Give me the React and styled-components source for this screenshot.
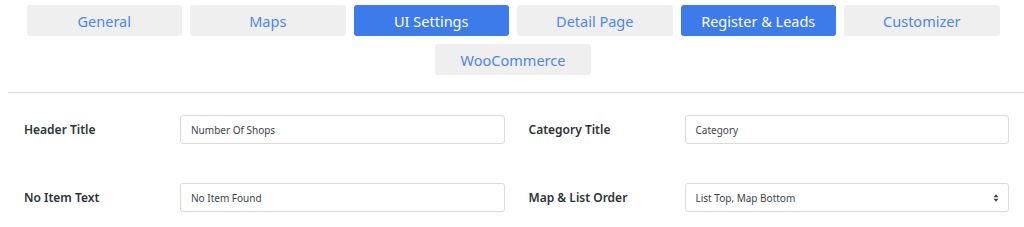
import React from "react";
import styled, { createGlobalStyle } from "styled-components";

const GlobalStyle = createGlobalStyle`
  body {
    margin: 0;
    background: #fff;
    font-family: "Noto Sans", "Open Sans", sans-serif;
  }
`;

const tabs = [
  { label: "General" },
  { label: "Maps" },
  { label: "UI Settings", active: true },
  { label: "Detail Page" },
  { label: "Register & Leads", active: true },
  { label: "Customizer" },
  { label: "WooCommerce" },
];

function App() {
  return (
    <Page>
      <GlobalStyle />
      <TabBar>
        {tabs.map((t) => (
          <Tab key={t.label} $active={t.active}>
            {t.label}
          </Tab>
        ))}
      </TabBar>
      <Divider />
      <Form>
        <Field>
          <Label>Header Title</Label>
          <TextInput>Number Of Shops</TextInput>
        </Field>
        <Field>
          <Label>Category Title</Label>
          <TextInput>Category</TextInput>
        </Field>
        <Field>
          <Label>No Item Text</Label>
          <TextInput>No Item Found</TextInput>
        </Field>
        <Field>
          <Label>Map &amp; List Order</Label>
          <TextInput>
            List Top, Map Bottom
            <SelectArrow viewBox="0 0 8 12">
              <path d="M4 1.5 L7 5 H1 Z M4 10.5 L7 7 H1 Z" fill="#3c434a" />
            </SelectArrow>
          </TextInput>
        </Field>
      </Form>
    </Page>
  );
}

export default App;

const Page = styled.div`
  padding: 5px 0 0 8px;
`;

const TabBar = styled.div`
  display: flex;
  flex-wrap: wrap;
  justify-content: center;
  gap: 8px;
  padding-left: 1px;
  padding-right: 7px;
`;

const Tab = styled.div`
  width: 155.5px;
  height: 31px;
  box-sizing: border-box;
  display: flex;
  align-items: center;
  justify-content: center;
  border-radius: 3px;
  font-size: 14.5px;
  background: ${(p) => (p.$active ? "#3c7be9" : "#efefef")};
  color: ${(p) => (p.$active ? "#ffffff" : "#4c86ee")};
`;

const Divider = styled.div`
  height: 1px;
  background: #dcdcde;
  margin-top: 17px;
`;

const Form = styled.div`
  display: grid;
  grid-template-columns: 1fr 1fr;
  column-gap: 24px;
  row-gap: 39px;
  padding: 22px 15px 0 16px;
`;

const Field = styled.div`
  display: grid;
  grid-template-columns: 156px 1fr;
  align-items: center;
`;

const Label = styled.div`
  font-size: 12px;
  font-weight: 600;
  color: #2c3338;
`;

const TextInput = styled.div`
  position: relative;
  height: 29px;
  box-sizing: border-box;
  border: 1px solid #dcdcde;
  border-radius: 3px;
  padding: 0 10px;
  display: flex;
  align-items: center;
  font-size: 10px;
  color: #3c434a;
`;

const SelectArrow = styled.svg`
  position: absolute;
  right: 8px;
  top: 9px;
  width: 8px;
  height: 10px;
`;
